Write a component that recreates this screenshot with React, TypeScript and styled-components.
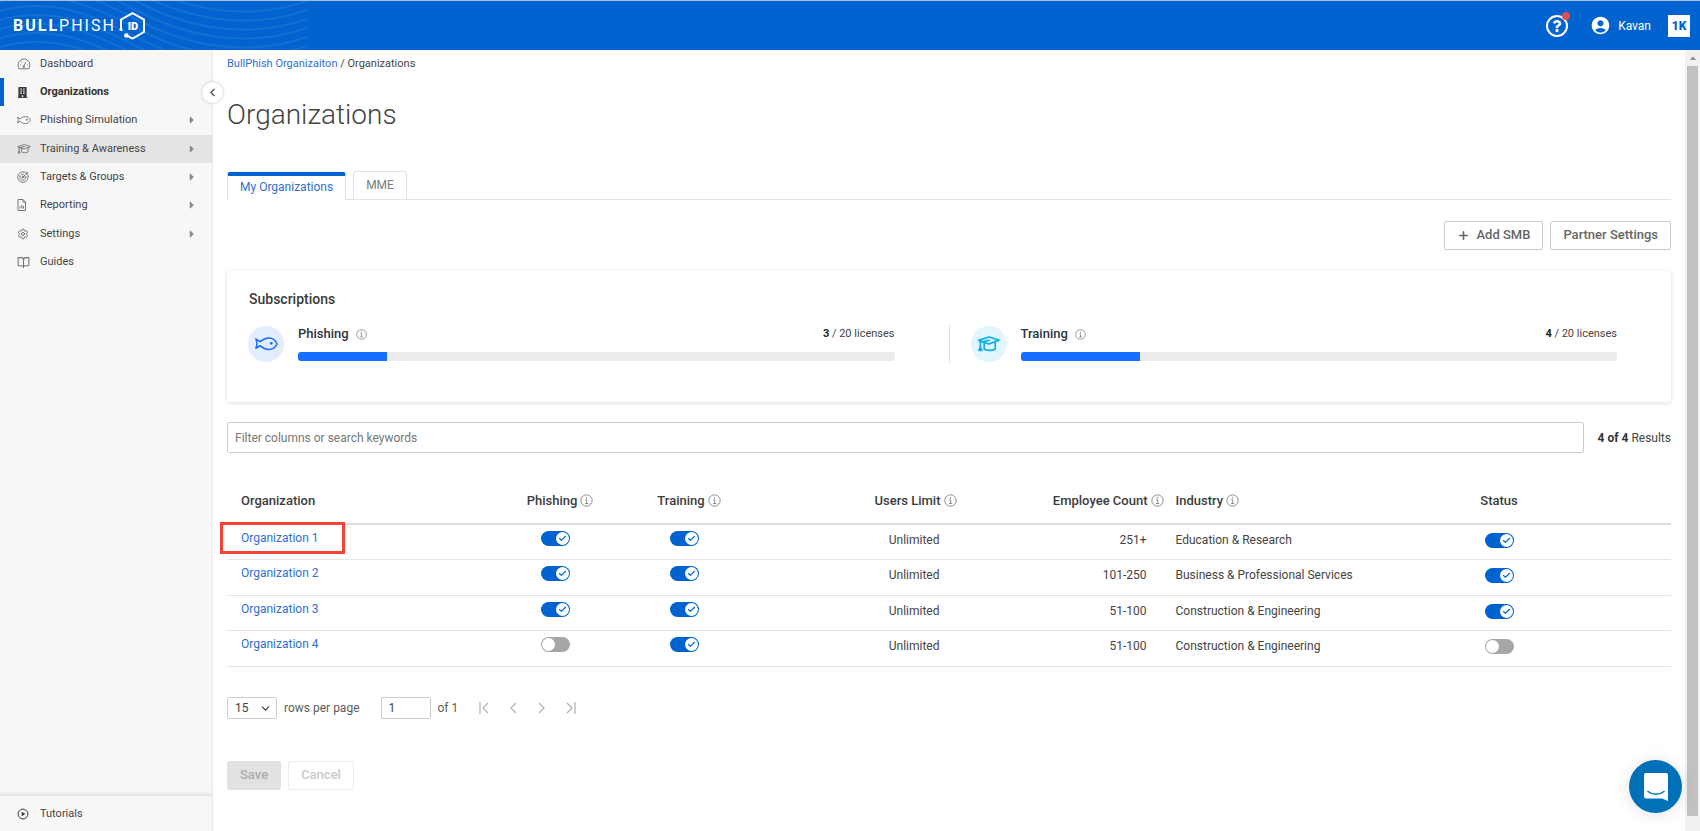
import React, { useState } from 'react';
import styled, { createGlobalStyle, css } from 'styled-components';
import { FaBuilding, FaQuestion, FaCaretRight, FaCaretUp } from 'react-icons/fa';
import { MdAccountCircle } from 'react-icons/md';
import { BookOpen, Check, ChevronDown, ChevronLeft, Plus, Settings } from 'lucide-react';

const blue = '#0063cf';
const link = '#2f6fd0';
const ink = '#444';

const GlobalStyle = createGlobalStyle`
  *, *::before, *::after { box-sizing: border-box; }
  body {
    margin: 0;
    background: #fff;
    color: ${ink};
    font-family: Roboto, "Liberation Sans", sans-serif;
    font-size: 12px;
    line-height: 16px;
  }
  button, input, select { font: inherit; color: inherit; margin: 0; }
  button { cursor: pointer; }
  a { text-decoration: none; }
  svg { display: block; flex: none; }
`;

/* ---------- icons ---------- */

type IconProps = { size?: number; weight?: number };

const FishIcon = ({ size = 14, weight = 1 }: IconProps) => (
  <svg width={size} height={(size * 14) / 24} viewBox="0 0 24 14" fill="none" stroke="currentColor" strokeWidth={weight} strokeLinejoin="round" strokeLinecap="round">
    <path d="M1 2.2 5.2 4.9C8 2.6 11 1 14.4 1c4 0 7 2.600 8.600 6-1.600 3.400-4.600 6-8.600 6C11 13 8 11.400 5.200 9.100L1 11.800 2.200 7Z" />
    <circle cx="17" cy="6.600" r="0.700" fill="currentColor" />
  </svg>
);

const CapIcon = ({ size = 14, weight = 1 }: IconProps) => (
  <svg width={size} height={(size * 16) / 24} viewBox="0 0 24 16" fill="none" stroke="currentColor" strokeWidth={weight} strokeLinejoin="round" strokeLinecap="round">
    <path d="M1.500 4.500 12.500 1 23 4.300 12.500 8.300Z" />
    <path d="M7.500 7.200v6.300c3 2 8.500 2 11.500 0V6.500" />
    <path d="M12.500 4.500 3.500 6.500v5M2 15l1.500-3.500L5 15Z" />
  </svg>
);

const GaugeIcon = () => (
  <svg width="14" height="12" viewBox="0 0 14 12" fill="none" stroke="currentColor" strokeLinecap="round" strokeLinejoin="round">
    <path d="M2 10.500A6 6 0 1 1 12 10.500Z" />
    <path d="M6.700 8.500 8.500 4.500M3.500 7h.1M4.800 4.300h.1M10.500 7h.1" />
    <circle cx="6.700" cy="8.700" r="0.800" />
  </svg>
);

const TargetIcon = () => (
  <svg width="12" height="12" viewBox="0 0 12 12" fill="none" stroke="currentColor" strokeLinecap="round">
    <path d="M11 4.300A5.300 5.300 0 1 1 7.700 1" />
    <path d="M9 5.500A3.100 3.100 0 1 1 6.500 3" />
    <circle cx="6" cy="6" r="1" />
    <path d="m5.800 6.200 4.700-4.700M9.200 1v1.800H11" />
  </svg>
);

const ReportIcon = () => (
  <svg width="10" height="12" viewBox="0 0 10 12" fill="none" stroke="currentColor" strokeLinejoin="round">
    <path d="M1 .500h5L8.500 3v8.500H1Z M6 .500V3h2.500" />
    <path d="M3.200 9.500v-2M4.800 9.500V6M6.400 9.500V7" />
  </svg>
);

const PlayIcon = () => (
  <svg width="12" height="12" viewBox="0 0 12 12" fill="none" stroke="currentColor">
    <circle cx="6" cy="6" r="4.900" />
    <path d="M4.700 3.700 8.400 6 4.700 8.300Z" fill="currentColor" stroke="none" />
  </svg>
);

const InfoIcon = ({ size = 13 }: { size?: number }) => (
  <svg width={size} height={size} viewBox="0 0 13 13" fill="none" stroke="currentColor">
    <circle cx="6.500" cy="6.500" r="5.700" />
    <path d="M5.300 5.700h1.400V9.500M5 9.500h3.200" />
    <circle cx="6.500" cy="3.700" r="0.800" fill="currentColor" stroke="none" />
  </svg>
);

const FirstIcon = () => (
  <svg width="10" height="12" viewBox="0 0 10 12" fill="none" stroke="currentColor" strokeWidth="1.300">
    <path d="M1 0v12M9 1 4 6l5 5" />
  </svg>
);

const LastIcon = () => (
  <svg width="10" height="12" viewBox="0 0 10 12" fill="none" stroke="currentColor" strokeWidth="1.300">
    <path d="M9 0v12M1 1l5 5-5 5" />
  </svg>
);

const PrevIcon = () => (
  <svg width="7" height="12" viewBox="0 0 7 12" fill="none" stroke="currentColor" strokeWidth="1.300">
    <path d="M6 1 1 6l5 5" />
  </svg>
);

const NextIcon = () => (
  <svg width="7" height="12" viewBox="0 0 7 12" fill="none" stroke="currentColor" strokeWidth="1.300">
    <path d="m1 1 5 5-5 5" />
  </svg>
);

const ShieldMark = () => (
  <svg width="26" height="28" viewBox="0 0 26 28" fill="none" stroke="#fff" strokeWidth="2">
    <path d="M2 17V7.500L13.500 1.200 25 7.500V20L13.500 26.600 8 23.700" />
    <circle cx="2" cy="17.500" r="1.600" fill="#fff" stroke="none" />
    <circle cx="7.300" cy="23.500" r="2.300" fill="#fff" stroke="none" />
    <text x="14" y="17.500" textAnchor="middle" fill="#fff" stroke="none" fontFamily="Roboto" fontWeight="900" fontSize="11" letterSpacing="0">ID</text>
  </svg>
);

const ChatIcon = () => (
  <svg width="26" height="30" viewBox="0 0 26 30">
    <path d="M3 1h20a2 2 0 0 1 2 2v26l-6-2.500H3a2 2 0 0 1-2-2V3a2 2 0 0 1 2-2Z" fill="#fff" />
    <path d="M5 19.500c4.500 3.700 11.500 3.700 16 0" fill="none" stroke="#0071b8" strokeWidth="1.600" strokeLinecap="round" />
  </svg>
);

/* ---------- top bar ---------- */

const TopBar = styled.header`
  position: relative;
  display: flex;
  align-items: center;
  height: 50px;
  padding: 0 10px 0 13px;
  border-top: 1px solid #a9c0d6;
  background: ${blue};
  color: #fff;
`;

const Waves = styled.svg`
  position: absolute;
  top: 0;
  left: 0;
  opacity: 0.08;
`;

const Brand = styled.a`
  position: relative;
  display: flex;
  align-items: center;
  gap: 3px;
  margin-right: auto;
  color: #fff;
  font-size: 16px;
  letter-spacing: 2px;
  b { font-weight: 700; }
`;

const HelpButton = styled.button`
  position: relative;
  display: grid;
  place-items: center;
  width: 22px;
  height: 22px;
  margin-right: 22px;
  padding: 0;
  border: 2px solid #fff;
  border-radius: 50%;
  background: none;
`;

const AlertDot = styled.span`
  position: absolute;
  top: -5px;
  right: -4px;
  width: 8px;
  height: 8px;
  border-radius: 50%;
  background: #e04f4f;
`;

const UserButton = styled.button`
  display: flex;
  align-items: center;
  gap: 7px;
  margin-right: 17px;
  padding: 0;
  border: 0;
  background: none;
`;

const SuiteLink = styled.a`
  display: grid;
  place-items: center;
  width: 22px;
  height: 22px;
  background: #fff;
  color: ${blue};
  font-weight: 900;
`;

/* ---------- side navigation ---------- */

const Shell = styled.div`
  display: flex;
  flex-direction: column;
  min-height: 100vh;
`;

const Body = styled.div`
  display: flex;
  flex: 1;
`;

const Sidebar = styled.aside`
  position: relative;
  display: flex;
  flex-direction: column;
  flex: none;
  width: 213px;
  border-right: 1px solid #e8e8e8;
  background: #f7f7f7;
`;

const NavList = styled.ul`
  display: flex;
  flex: 1;
  flex-direction: column;
  margin: 0;
  padding: 0;
  list-style: none;
  li:nth-child(3n) { margin-bottom: 1px; }
`;

const NavLink = styled.a<{ $current?: boolean; $hovered?: boolean }>`
  display: flex;
  align-items: center;
  height: 28px;
  padding: 0 14px 0 17px;
  color: ${ink};
  font-size: 11px;
  ${p => p.$hovered && css`background: #e4e4e4;`}
  ${p => p.$current && css`
    box-shadow: inset 4px 0 ${blue};
    color: #333;
    font-weight: 700;
  `}
`;

const NavIcon = styled.span<{ $dark?: boolean }>`
  display: flex;
  width: 23px;
  color: ${p => (p.$dark ? '#3a3a3a' : '#767676')};
`;

const NavText = styled.span`
  flex: 1;
`;

const NavCaret = styled(FaCaretRight)`
  color: #8a8a8a;
`;

const SidebarFoot = styled.div`
  padding: 4px 0 3px;
  border-top: 1px solid #e4e4e4;
  box-shadow: 0 -2px 3px #e8e8e8;
`;

const CollapseButton = styled.button`
  position: absolute;
  top: 32px;
  right: -11px;
  z-index: 1;
  display: grid;
  place-items: center;
  width: 21px;
  height: 21px;
  padding: 0;
  border: 0;
  border-radius: 50%;
  background: #fff;
  box-shadow: 0 0 3px #bbb;
`;

/* ---------- main column ---------- */

const Main = styled.main`
  flex: 1;
  min-width: 0;
  padding: 6px 14px 40px;
`;

const Crumbs = styled.nav`
  font-size: 11px;
  a { color: ${link}; }
`;

const Title = styled.h1`
  margin: 26px 0 39px;
  color: #444;
  font-size: 28px;
  font-weight: 300;
  line-height: 34px;
`;

const Tabs = styled.div`
  display: flex;
  align-items: flex-end;
  gap: 7px;
  border-bottom: 1px solid #e2e2e2;
`;

const Tab = styled.button<{ $active?: boolean }>`
  height: 28px;
  padding: 0 12px 2px;
  border: 1px solid #e2e2e2;
  border-bottom: 0;
  border-radius: 3px 3px 0 0;
  background: #fff;
  color: #7a7a7a;
  ${p => p.$active && css`
    margin-bottom: -1px;
    border-top: 4px solid ${blue};
    color: ${link};
  `}
`;

const Actions = styled.div`
  display: flex;
  justify-content: flex-end;
  gap: 7px;
  margin: 21px 0;
`;

const Button = styled.button<{ $filled?: boolean }>`
  display: flex;
  align-items: center;
  gap: 6px;
  height: 29px;
  padding: 0 12px 1px;
  border: 1px solid #ccc;
  border-radius: 2px;
  background: #fff;
  color: #666;
  font-size: 13px;
  font-weight: 500;
  &:disabled {
    border-color: ${p => (p.$filled ? '#e2e2e2' : '#ececec')};
    background: ${p => (p.$filled ? '#e2e2e2' : '#fff')};
    color: ${p => (p.$filled ? '#adadad' : '#cacaca')};
    cursor: default;
  }
`;

const Card = styled.section`
  padding: 20px 0 40px;
  border-radius: 4px;
  box-shadow: 0 1px 5px #dcdcdc;
`;

const CardTitle = styled.h2`
  margin: 0 22px 19px;
  color: #3a3a3a;
  font-size: 14px;
  font-weight: 500;
  line-height: 16px;
`;

const Plans = styled.div`
  display: flex;
`;

const Plan = styled.div`
  display: flex;
  flex: 1;
  gap: 14px;
  padding: 0 54px 0 21px;
  & + & { border-left: 1px solid #e0e0e0; }
`;

const PlanBadge = styled.span<{ $tint: string; $color: string }>`
  display: grid;
  place-items: center;
  flex: none;
  width: 36px;
  height: 36px;
  border-radius: 50%;
  background: ${p => p.$tint};
  color: ${p => p.$color};
`;

const PlanBody = styled.div`
  display: flex;
  flex: 1;
  flex-direction: column;
  gap: 10px;
`;

const PlanHead = styled.div`
  display: flex;
  align-items: center;
  gap: 7px;
  color: #2b3440;
  svg { color: #888; }
`;

const PlanName = styled.span`
  font-size: 13px;
  font-weight: 500;
`;

const Licences = styled.span`
  margin-left: auto;
  color: #444;
  font-size: 11px;
  b { color: #222; }
`;

const Track = styled.div`
  height: 9px;
  border-radius: 3px;
  background: #ececec;
  overflow: hidden;
`;

const Fill = styled.div`
  height: 100%;
  background: #1670ff;
`;

const FilterRow = styled.div`
  display: flex;
  align-items: center;
  gap: 14px;
  margin: 20px 0 25px;
`;

const FilterInput = styled.input`
  flex: 1;
  height: 31px;
  padding: 0 7px;
  border: 1px solid #ccc;
  border-radius: 2px;
  &::placeholder { color: #777; opacity: 1; }
`;

const Results = styled.span`
  b { color: #333; font-weight: 700; }
`;

/* ---------- table ---------- */

type Align = 'left' | 'center' | 'right';

const Table = styled.table`
  width: 100%;
  table-layout: fixed;
  border-collapse: separate;
  border-spacing: 0;
`;

const Th = styled.th<{ $align?: Align; $width?: number; $pad?: string }>`
  width: ${p => (p.$width ? `${p.$width}px` : 'auto')};
  height: 47px;
  padding: ${p => p.$pad ?? '0'};
  border-bottom: 2px solid #dedede;
  color: #3c3c3c;
  font-size: 13px;
  font-weight: 500;
  text-align: ${p => p.$align ?? 'left'};
`;

const HeadLabel = styled.span`
  display: inline-flex;
  align-items: center;
  gap: 3px;
  vertical-align: middle;
  svg { color: #8c8c8c; }
`;

const Row = styled.tr`
  height: 35px;
  &:nth-child(even) { height: 36px; }
`;

const Td = styled.td<{ $align?: Align; $pad?: string }>`
  padding: ${p => p.$pad ?? '6px 0 0'};
  border-bottom: 1px solid #e4e4e4;
  text-align: ${p => p.$align ?? 'left'};
  vertical-align: top;
`;

const OrgLink = styled.a<{ $marked?: boolean }>`
  position: relative;
  color: ${link};
  ${p => p.$marked && css`
    &::after {
      content: '';
      position: absolute;
      inset: -9px -26px -9px -21px;
      border: 3px solid #f44336;
    }
  `}
`;

const SwitchBox = styled.label`
  position: relative;
  display: inline-flex;
  width: 29px;
  height: 15px;
  vertical-align: top;
  cursor: pointer;
`;

const SwitchInput = styled.input`
  width: 100%;
  height: 100%;
  appearance: none;
  border-radius: 8px;
  background: #a6a6a6;
  cursor: inherit;
  &:checked { background: ${blue}; }
`;

const Knob = styled.span<{ $on: boolean }>`
  position: absolute;
  top: 1px;
  ${p => (p.$on ? 'right: 1px;' : 'left: 1px;')}
  display: grid;
  place-items: center;
  width: 13px;
  height: 13px;
  border-radius: 50%;
  background: #fff;
  color: ${blue};
  pointer-events: none;
`;

const Switch = ({ label, initial }: { label: string; initial: boolean }) => {
  const [on, setOn] = useState(initial);
  return (
    <SwitchBox>
      <SwitchInput type="checkbox" aria-label={label} checked={on} onChange={() => setOn(!on)} />
      <Knob $on={on}>{on && <Check size={9} strokeWidth={3} />}</Knob>
    </SwitchBox>
  );
};

/* ---------- footer ---------- */

const Pager = styled.div`
  display: flex;
  align-items: center;
  gap: 7px;
  margin: 30px 0 42px;
  color: #5c5c5c;
`;

const PageSize = styled.span`
  position: relative;
  display: flex;
  svg {
    position: absolute;
    top: 5px;
    right: 5px;
    color: #333;
    pointer-events: none;
  }
`;

const PageSelect = styled.select`
  width: 50px;
  height: 22px;
  padding: 0 7px;
  border: 1px solid #ccc;
  border-radius: 2px;
  appearance: none;
  background: #fff;
  color: #444;
`;

const PageInput = styled.input`
  width: 50px;
  height: 22px;
  margin-left: 14px;
  padding: 0 7px;
  border: 1px solid #ccc;
  border-radius: 2px;
  color: #444;
`;

const PageButtons = styled.div`
  display: flex;
  gap: 21px;
  margin-left: 14px;
`;

const PageButton = styled.button`
  padding: 0;
  border: 0;
  background: none;
  color: #b4b4b4;
`;

const FormActions = styled.div`
  display: flex;
  gap: 7px;
`;

const ScrollRail = styled.div`
  display: flex;
  flex: none;
  flex-direction: column;
  align-items: center;
  width: 15px;
  padding: 3px 0 15px;
  background: #f1f1f1;
  color: #909090;
`;

const ScrollThumb = styled.div`
  flex: 1;
  width: 11px;
  margin-top: 3px;
  background: #c1c1c1;
`;

const ChatButton = styled.button`
  position: fixed;
  right: 18px;
  bottom: 18px;
  display: grid;
  place-items: center;
  width: 53px;
  height: 53px;
  padding: 0;
  border: 0;
  border-radius: 50%;
  background: #0071b8;
  box-shadow: 0 1px 16px rgba(0, 0, 0, 0.12);
`;

/* ---------- data ---------- */

const navItems = [
  { text: 'Dashboard', icon: <GaugeIcon /> },
  { text: 'Organizations', icon: <FaBuilding size={11} />, current: true },
  { text: 'Phishing Simulation', icon: <FishIcon size={14} weight={1.600} />, nested: true },
  { text: 'Training & Awareness', icon: <CapIcon size={14} weight={1.600} />, nested: true, hovered: true },
  { text: 'Targets & Groups', icon: <TargetIcon />, nested: true },
  { text: 'Reporting', icon: <ReportIcon />, nested: true },
  { text: 'Settings', icon: <Settings size={12} strokeWidth={2} />, nested: true },
  { text: 'Guides', icon: <BookOpen size={13} strokeWidth={2} /> },
];

const plans = [
  { name: 'Phishing', used: 3, total: 20, tint: '#e3edfd', color: '#1670ff', icon: <FishIcon size={23} weight={1.600} /> },
  { name: 'Training', used: 4, total: 20, tint: '#e2f6fd', color: '#10aeea', icon: <CapIcon size={23} weight={1.800} /> },
];

const organizations = [
  { name: 'Organization 1', phishing: true, training: true, employees: '251+', industry: 'Education & Research', status: true },
  { name: 'Organization 2', phishing: true, training: true, employees: '101-250', industry: 'Business & Professional Services', status: true },
  { name: 'Organization 3', phishing: true, training: true, employees: '51-100', industry: 'Construction & Engineering', status: true },
  { name: 'Organization 4', phishing: false, training: true, employees: '51-100', industry: 'Construction & Engineering', status: false },
];

const waveStarts = Array.from({ length: 13 }, (_, i) => i * 9 - 44);

export default function App() {
  return (
    <Shell>
      <GlobalStyle />
      <TopBar>
        <Waves width="307" height="49" viewBox="0 0 307 49" fill="none" stroke="#fff" strokeWidth="2" aria-hidden>
          {waveStarts.map(y => (
            <path key={y} d={`M0 ${y}C50 ${y - 14} 90 ${y + 2} 140 ${y + 28}S250 ${y + 64} 307 ${y + 44}`} />
          ))}
        </Waves>
        <Brand href="#home">
          <span><b>BULL</b>PHISH</span>
          <ShieldMark />
        </Brand>
        <HelpButton aria-label="Help">
          <FaQuestion size={12} />
          <AlertDot />
        </HelpButton>
        <UserButton>
          <MdAccountCircle size={21} />
          Kavan
        </UserButton>
        <SuiteLink href="#suite">1K</SuiteLink>
      </TopBar>

      <Body>
        <Sidebar>
          <NavList>
            {navItems.map(item => (
              <li key={item.text}>
                <NavLink href="#nav" $current={item.current} $hovered={item.hovered}>
                  <NavIcon $dark={item.current}>{item.icon}</NavIcon>
                  <NavText>{item.text}</NavText>
                  {item.nested && <NavCaret size={12} />}
                </NavLink>
              </li>
            ))}
          </NavList>
          <SidebarFoot>
            <NavLink href="#tutorials">
              <NavIcon $dark><PlayIcon /></NavIcon>
              <NavText>Tutorials</NavText>
            </NavLink>
          </SidebarFoot>
          <CollapseButton aria-label="Collapse menu"><ChevronLeft size={13} /></CollapseButton>
        </Sidebar>

        <Main>
          <Crumbs>
            <a href="#root-organization">BullPhish Organizaiton</a> / Organizations
          </Crumbs>
          <Title>Organizations</Title>

          <Tabs>
            <Tab $active>My Organizations</Tab>
            <Tab>MME</Tab>
          </Tabs>

          <Actions>
            <Button><Plus size={13} strokeWidth={3} />Add SMB</Button>
            <Button>Partner Settings</Button>
          </Actions>

          <Card>
            <CardTitle>Subscriptions</CardTitle>
            <Plans>
              {plans.map(plan => (
                <Plan key={plan.name}>
                  <PlanBadge $tint={plan.tint} $color={plan.color}>{plan.icon}</PlanBadge>
                  <PlanBody>
                    <PlanHead>
                      <PlanName>{plan.name}</PlanName>
                      <InfoIcon size={11} />
                      <Licences><b>{plan.used}</b> / {plan.total} licenses</Licences>
                    </PlanHead>
                    <Track><Fill style={{ width: `${(plan.used / plan.total) * 100}%` }} /></Track>
                  </PlanBody>
                </Plan>
              ))}
            </Plans>
          </Card>

          <FilterRow>
            <FilterInput aria-label="Filter" placeholder="Filter columns or search keywords" />
            <Results><b>4 of 4</b> Results</Results>
          </FilterRow>

          <Table>
            <thead>
              <tr>
                <Th $pad="0 0 0 14px">Organization</Th>
                <Th $align="center" $width={128} $pad="0 0 0 9px"><HeadLabel>Phishing <InfoIcon /></HeadLabel></Th>
                <Th $align="center" $width={130} $pad="0 0 0 9px"><HeadLabel>Training <InfoIcon /></HeadLabel></Th>
                <Th $align="right" $width={207}><HeadLabel>Users Limit <InfoIcon /></HeadLabel></Th>
                <Th $align="right" $width={207}><HeadLabel>Employee Count <InfoIcon /></HeadLabel></Th>
                <Th $pad="0 0 0 12px"><HeadLabel>Industry <InfoIcon /></HeadLabel></Th>
                <Th $align="center" $width={243} $pad="0 101px 0 0">Status</Th>
              </tr>
            </thead>
            <tbody>
              {organizations.map((org, i) => (
                <Row key={org.name}>
                  <Td $pad="5px 0 0 14px"><OrgLink href="#organization" $marked={i === 0}>{org.name}</OrgLink></Td>
                  <Td $align="center"><Switch label={`Phishing for ${org.name}`} initial={org.phishing} /></Td>
                  <Td $align="center"><Switch label={`Training for ${org.name}`} initial={org.training} /></Td>
                  <Td $align="right" $pad="7px 17px 0 0">Unlimited</Td>
                  <Td $align="right" $pad="7px 17px 0 0">{org.employees}</Td>
                  <Td $pad="7px 0 0 12px">{org.industry}</Td>
                  <Td $align="center" $pad="8px 101px 0 0"><Switch label={`Status of ${org.name}`} initial={org.status} /></Td>
                </Row>
              ))}
            </tbody>
          </Table>

          <Pager>
            <PageSize>
              <PageSelect aria-label="Rows per page" defaultValue="15">
                <option>15</option>
              </PageSelect>
              <ChevronDown size={13} />
            </PageSize>
            rows per page
            <PageInput aria-label="Page" defaultValue="1" />
            of 1
            <PageButtons>
              <PageButton aria-label="First page"><FirstIcon /></PageButton>
              <PageButton aria-label="Previous page"><PrevIcon /></PageButton>
              <PageButton aria-label="Next page"><NextIcon /></PageButton>
              <PageButton aria-label="Last page"><LastIcon /></PageButton>
            </PageButtons>
          </Pager>

          <FormActions>
            <Button $filled disabled>Save</Button>
            <Button disabled>Cancel</Button>
          </FormActions>
        </Main>

        <ScrollRail aria-hidden>
          <FaCaretUp size={10} />
          <ScrollThumb />
        </ScrollRail>
      </Body>

      <ChatButton aria-label="Open chat"><ChatIcon /></ChatButton>
    </Shell>
  );
}
